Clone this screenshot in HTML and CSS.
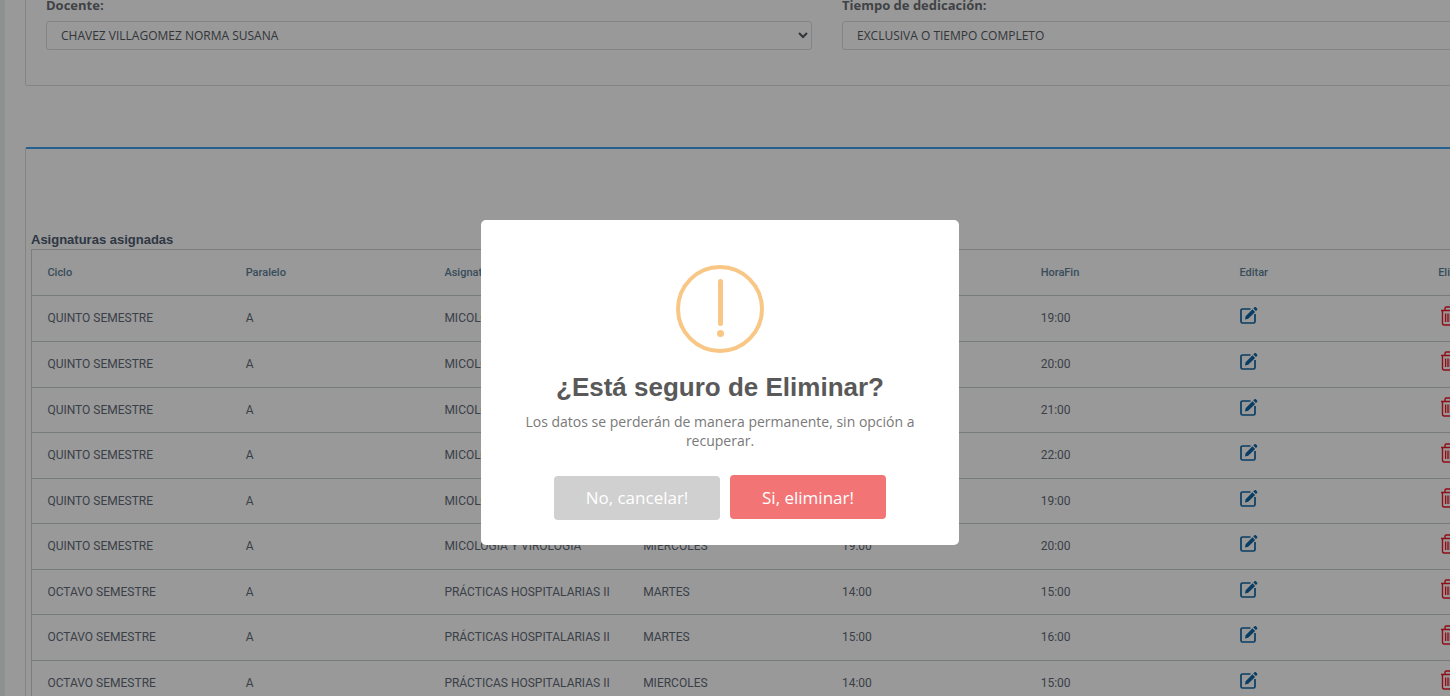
FILE: index.html
```html
<!DOCTYPE html>
<html>

<head>
    <title>Asignaturas asignadas</title>
    <meta charset="UTF-8">
    <link rel="stylesheet" href="styles.css">
</head>

<body>
    <svg class="icon-defs" width="0" height="0">
        <symbol id="iconEdit" viewBox="0 0 18 18">
            <path d="M10.5 3H2.6C1.7 3 1 3.7 1 4.6v10.8c0 .9.7 1.6 1.6 1.6h10.8c.9 0 1.6-.7 1.6-1.6V8" fill="none" stroke="currentColor" stroke-width="1.7" />
            <path d="M5 13.4l.6-3.2 6.9-6.9 2.6 2.6-6.9 6.9zM13.3 2.5l1.2-1.2c.4-.4 1-.4 1.4 0l1.2 1.2c.4.4.4 1 0 1.4l-1.2 1.2z" fill="currentColor" />
        </symbol>
        <symbol id="iconTrash" viewBox="0 0 16 20">
            <path d="M1 4.5h14M2.5 4.5V17c0 1.2.7 2 1.6 2h7.8c.9 0 1.6-.8 1.6-2V4.5M5 4.5V2.4c0-.8.5-1.4 1.2-1.4h3.6c.7 0 1.2.6 1.2 1.4v2.1M5.6 7.5v8.5M8 7.5v8.5M10.4 7.5v8.5" fill="none" stroke="currentColor" stroke-width="1.4" />
        </symbol>
    </svg>

    <div class="layout">
        <div class="side-strip"></div>

        <main class="content">
            <section class="card card-filters">
                <div class="form-group">
                    <label for="docenteSelect">Docente:</label>
                    <select id="docenteSelect">
                        <option>CHAVEZ VILLAGOMEZ NORMA SUSANA</option>
                    </select>
                </div>
                <div class="form-group">
                    <label for="tiempoInput">Tiempo de dedicación:</label>
                    <input type="text" id="tiempoInput" value="EXCLUSIVA O TIEMPO COMPLETO" />
                </div>
            </section>

            <section class="card card-table">
                <h4>Asignaturas asignadas</h4>
                <table class="subjects">
                    <thead>
                        <tr>
                            <th>Ciclo</th>
                            <th>Paralelo</th>
                            <th>Asignatura</th>
                            <th>Día</th>
                            <th>HoraInicio</th>
                            <th>HoraFin</th>
                            <th>Editar</th>
                            <th>Eliminar</th>
                        </tr>
                    </thead>
                    <tbody>
                        <tr>
                            <td>QUINTO SEMESTRE</td><td>A</td><td>MICOLOGÍA Y VIROLOGÍA</td><td>LUNES</td><td>18:00</td><td>19:00</td>
                            <td><svg class="icon-edit"><use href="#iconEdit" /></svg></td>
                            <td><svg class="icon-trash"><use href="#iconTrash" /></svg></td>
                        </tr>
                        <tr>
                            <td>QUINTO SEMESTRE</td><td>A</td><td>MICOLOGÍA Y VIROLOGÍA</td><td>LUNES</td><td>19:00</td><td>20:00</td>
                            <td><svg class="icon-edit"><use href="#iconEdit" /></svg></td>
                            <td><svg class="icon-trash"><use href="#iconTrash" /></svg></td>
                        </tr>
                        <tr>
                            <td>QUINTO SEMESTRE</td><td>A</td><td>MICOLOGÍA Y VIROLOGÍA</td><td>LUNES</td><td>20:00</td><td>21:00</td>
                            <td><svg class="icon-edit"><use href="#iconEdit" /></svg></td>
                            <td><svg class="icon-trash"><use href="#iconTrash" /></svg></td>
                        </tr>
                        <tr>
                            <td>QUINTO SEMESTRE</td><td>A</td><td>MICOLOGÍA Y VIROLOGÍA</td><td>LUNES</td><td>21:00</td><td>22:00</td>
                            <td><svg class="icon-edit"><use href="#iconEdit" /></svg></td>
                            <td><svg class="icon-trash"><use href="#iconTrash" /></svg></td>
                        </tr>
                        <tr>
                            <td>QUINTO SEMESTRE</td><td>A</td><td>MICOLOGÍA Y VIROLOGÍA</td><td>MIERCOLES</td><td>18:00</td><td>19:00</td>
                            <td><svg class="icon-edit"><use href="#iconEdit" /></svg></td>
                            <td><svg class="icon-trash"><use href="#iconTrash" /></svg></td>
                        </tr>
                        <tr>
                            <td>QUINTO SEMESTRE</td><td>A</td><td>MICOLOGÍA Y VIROLOGÍA</td><td>MIERCOLES</td><td>19:00</td><td>20:00</td>
                            <td><svg class="icon-edit"><use href="#iconEdit" /></svg></td>
                            <td><svg class="icon-trash"><use href="#iconTrash" /></svg></td>
                        </tr>
                        <tr>
                            <td>OCTAVO SEMESTRE</td><td>A</td><td>PRÁCTICAS HOSPITALARIAS II</td><td>MARTES</td><td>14:00</td><td>15:00</td>
                            <td><svg class="icon-edit"><use href="#iconEdit" /></svg></td>
                            <td><svg class="icon-trash"><use href="#iconTrash" /></svg></td>
                        </tr>
                        <tr>
                            <td>OCTAVO SEMESTRE</td><td>A</td><td>PRÁCTICAS HOSPITALARIAS II</td><td>MARTES</td><td>15:00</td><td>16:00</td>
                            <td><svg class="icon-edit"><use href="#iconEdit" /></svg></td>
                            <td><svg class="icon-trash"><use href="#iconTrash" /></svg></td>
                        </tr>
                        <tr>
                            <td>OCTAVO SEMESTRE</td><td>A</td><td>PRÁCTICAS HOSPITALARIAS II</td><td>MIERCOLES</td><td>14:00</td><td>15:00</td>
                            <td><svg class="icon-edit"><use href="#iconEdit" /></svg></td>
                            <td><svg class="icon-trash"><use href="#iconTrash" /></svg></td>
                        </tr>
                    </tbody>
                </table>
            </section>
        </main>
    </div>

    <div class="overlay">
        <div class="modal">
            <div class="modal-icon"><span class="modal-icon-bar"></span><span class="modal-icon-dot"></span></div>
            <h2>¿Está seguro de Eliminar?</h2>
            <p>Los datos se perderán de manera permanente, sin opción a recuperar.</p>
            <div class="modal-actions">
                <button class="btn-cancel">No, cancelar!</button>
                <button class="btn-confirm">Si, eliminar!</button>
            </div>
        </div>
    </div>
</body>

</html>
```

FILE: styles.css
```css
html,
body {
    height: 100%;
    margin: 0;
    overflow: hidden;
}

body {
    font-family: "Open Sans", sans-serif;
    font-size: 12px;
    color: #5a5f66;
    background-color: #fff;
}

.icon-defs {
    position: absolute;
}

.layout {
    display: flex;
    height: 100%;
}

.side-strip {
    flex: 0 0 5px;
    background-color: #eef0f4;
}

.content {
    flex: 0 0 1640px;
    padding-left: 20px;
    box-sizing: border-box;
    margin-top: -5px;
}

.card {
    border: 1px solid #ddd;
    border-radius: 2px;
}

.card-filters {
    display: flex;
    gap: 30px;
    height: 91px;
    box-sizing: border-box;
    padding: 0 20px;
}

.form-group {
    flex: 0 0 766px;
}

label {
    display: block;
    font-size: 13px;
    font-weight: bold;
    line-height: 18px;
    margin-bottom: 7px;
    color: #6b6f75;
}

select,
input[type="text"] {
    width: 100%;
    height: 29px;
    box-sizing: border-box;
    border: 1px solid #ddd;
    border-radius: 3px;
    padding: 0 14px;
    background-color: #fff;
    color: #555a60;
    font-family: "Open Sans", sans-serif;
    font-size: 12px;
}

select {
    padding-left: 10px;
}

.card-table {
    margin-top: 61px;
    border-top: 2px solid #3ba4f0;
    padding-left: 5px;
    height: 600px;
}

.card-table h4 {
    margin: 82px 0 0;
    font-family: "Liberation Sans", sans-serif;
    font-size: 13px;
    font-weight: bold;
    line-height: 18px;
    color: #4d5d72;
}

.subjects {
    width: 1591px;
    table-layout: fixed;
    border-collapse: collapse;
    border: 1px solid #ccd2d6;
    font-family: Roboto, sans-serif;
    font-size: 12px;
    color: #5f6b78;
}

.subjects th,
.subjects td {
    padding: 0 15px 0 15.4px;
    text-align: left;
    border-bottom: 1px solid #c3cccf;
    white-space: nowrap;
}

.subjects th {
    height: 45.4px;
    font-size: 11px;
    font-weight: 500;
    color: #5e8199;
}

.subjects td {
    height: 44.07px;
    padding-bottom: 0.5px;
}

.icon-edit,
.icon-trash {
    display: block;
}

.icon-edit {
    width: 18px;
    height: 18px;
    margin-top: -6px;
    margin-left: 1px;
    color: #0f67a6;
}

.icon-trash {
    width: 16px;
    height: 20px;
    margin-top: -5px;
    margin-left: 2px;
    color: #f01525;
}

.overlay {
    position: fixed;
    inset: 0;
    display: flex;
    justify-content: center;
    padding-right: 10px;
    background-color: rgba(0, 0, 0, 0.4);
}

.modal {
    width: 478px;
    height: 325px;
    margin-top: 220px;
    box-sizing: border-box;
    padding-top: 45px;
    background-color: #fff;
    border-radius: 5px;
    text-align: center;
}

.modal-icon {
    display: flex;
    flex-direction: column;
    align-items: center;
    width: 88px;
    height: 88px;
    box-sizing: border-box;
    margin: 0 auto;
    padding-top: 10px;
    border: 4px solid #f8c786;
    border-radius: 50%;
}

.modal-icon-bar {
    width: 5px;
    height: 47px;
    border-radius: 3px;
    background-color: #f8c786;
}

.modal-icon-dot {
    width: 7px;
    height: 7px;
    margin-top: 4px;
    border-radius: 50%;
    background-color: #f8c786;
}

.modal h2 {
    margin: 18px 0 0;
    font-family: "Liberation Sans", sans-serif;
    font-size: 26px;
    font-weight: bold;
    line-height: 32px;
    color: #595959;
}

.modal p {
    width: 400px;
    margin: 9px auto 0;
    font-size: 14px;
    line-height: 19px;
    color: #797979;
}

.modal-actions {
    display: flex;
    justify-content: center;
    gap: 10px;
    margin-top: 25px;
    align-items: flex-start;
}

.modal-actions button {
    height: 44px;
    border: none;
    border-radius: 4px;
    color: #fff;
    font-family: "Open Sans", sans-serif;
    font-size: 17px;
    font-weight: 500;
    cursor: pointer;
}

.btn-cancel {
    width: 166px;
    margin-top: 1px;
    padding-bottom: 3px;
    background-color: #d0d0d0;
}

.btn-confirm {
    width: 156px;
    background-color: #f27474;
}
```
